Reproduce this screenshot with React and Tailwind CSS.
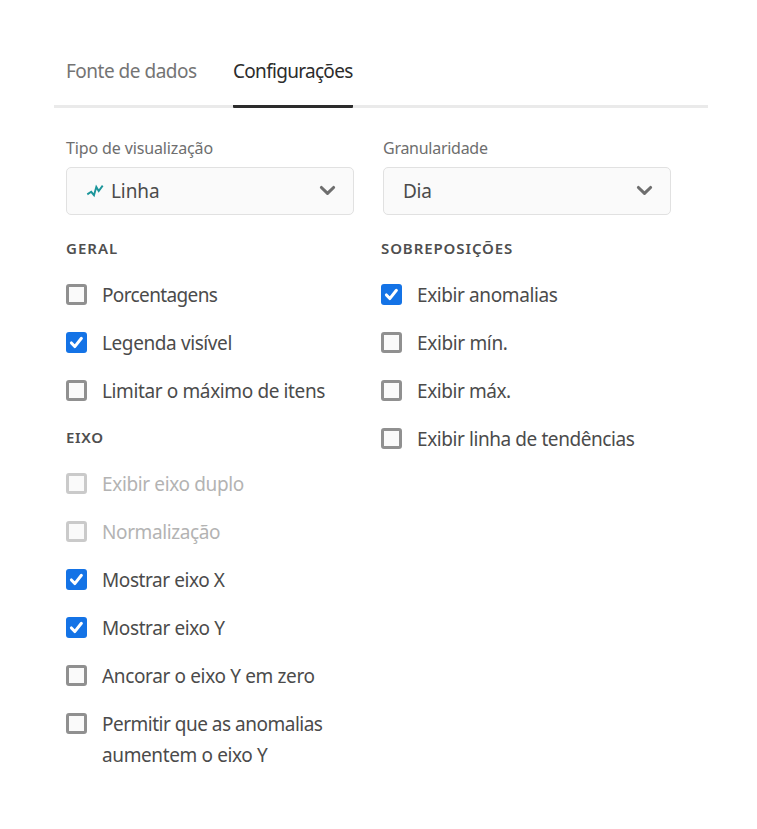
const general = [
  { label: "Porcentagens", track: "tracking-[-0.63px]" },
  { label: "Legenda visível", track: "tracking-[-0.4px]", checked: true },
  { label: "Limitar o máximo de itens", track: "tracking-[-0.38px]" },
];

const axis = [
  { label: "Exibir eixo duplo", track: "tracking-[-0.36px]", disabled: true },
  { label: "Normalização", track: "tracking-[-0.4px]", disabled: true },
  { label: "Mostrar eixo X", track: "tracking-[-0.42px]", checked: true },
  { label: "Mostrar eixo Y", track: "tracking-[-0.4px]", checked: true },
  { label: "Ancorar o eixo Y em zero", track: "tracking-[-0.36px]" },
  {
    label: "Permitir que as anomalias",
    track: "tracking-[-0.5px]",
    second: "aumentem o eixo Y",
    secondTrack: "tracking-[-0.38px]",
  },
];

const overlays = [
  { label: "Exibir anomalias", track: "tracking-[-0.4px]", checked: true },
  { label: "Exibir mín.", track: "tracking-[-0.35px]" },
  { label: "Exibir máx.", track: "tracking-[-0.43px]" },
  { label: "Exibir linha de tendências", track: "tracking-[-0.42px]" },
];

function Box({ checked, disabled }) {
  if (checked) {
    return (
      <span className="mt-[13px] flex size-[21px] shrink-0 rounded-[3px] bg-[#1473e6]">
        <svg viewBox="0 0 21 21" className="size-[21px]" fill="none" stroke="#fff" strokeWidth="3" strokeLinecap="round" strokeLinejoin="round">
          <path d="M5.4 10.9 8.8 14.6 15.4 6.3" />
        </svg>
      </span>
    );
  }
  return (
    <span
      className={`mt-[13px] size-[21px] shrink-0 rounded-[3px] border-3 bg-[#fafafa] ${disabled ? "border-[#cacaca]" : "border-[#909090]"}`}
    />
  );
}

function Option({ label, track, second, secondTrack, checked, disabled }) {
  return (
    <div className="flex min-h-12 items-start">
      <Box checked={checked} disabled={disabled} />
      <div className={`mt-[9px] ml-[15px] flex flex-col text-[19px] leading-[31px] whitespace-nowrap ${disabled ? "text-[#b3b3b3]" : "text-[#4b4b4b]"}`}>
        <span className={track}>{label}</span>
        {second && <span className={secondTrack}>{second}</span>}
      </div>
    </div>
  );
}

function Section({ title, track, options }) {
  return (
    <section>
      <h3 className={`h-[45px] text-[15px] leading-[45px] font-semibold text-[#4f4f4f] ${track}`}>{title}</h3>
      {options.map((o) => (
        <Option key={o.label} {...o} />
      ))}
    </section>
  );
}

function Picker({ label, labelTrack, children }) {
  return (
    <div className="w-72">
      <div className={`h-[39px] text-[16px] leading-[40px] text-[#6e6e6e] ${labelTrack}`}>{label}</div>
      <div className="flex h-12 items-center rounded-[5px] border border-[#e1e1e1] bg-[#fafafa] pr-[17px] pl-[18px] text-[19px] text-[#4b4b4b]">
        {children}
        <svg viewBox="0 0 17 11" className="mb-px ml-auto h-[11px] w-[17px]" fill="none" stroke="#6e6e6e" strokeWidth="3.1" strokeLinecap="round" strokeLinejoin="round">
          <path d="M2.4 2.5 8.5 8.4 14.6 2.5" />
        </svg>
      </div>
    </div>
  );
}

export default function App() {
  return (
    <div className="h-[829px] w-[757px] bg-white pt-[34px] font-['Noto_Sans',sans-serif]">
      <nav className="ml-[54px] flex h-[74px] w-[654px] border-b-3 border-[#eaeaea] pl-3 text-[19px] leading-[75px] whitespace-nowrap">
        <div className="w-[167px] tracking-[-0.5px] text-[#747474]">Fonte de dados</div>
        <div className="h-[74px] w-[120px] shrink-0 rounded-b-[1px] border-b-3 border-[#2c2c2c] tracking-[-0.7px] text-[#2c2c2c]">
          Configurações
        </div>
      </nav>
      <div className="mt-5 ml-[66px] flex gap-[29px]">
        <Picker label="Tipo de visualização" labelTrack="tracking-[-0.13px]">
          <svg viewBox="0 0 18 14" className="mr-[7px] ml-[1px] h-[14px] w-[18px]" fill="none" stroke="#1b959a" strokeWidth="1.9">
            <path d="M1.3 10.4 5.2 7.8 8 11.2 10.3 2.9 12.7 7 16.7 1.6" />
          </svg>
          <span className="tracking-[-0.1px]">Linha</span>
        </Picker>
        <Picker label="Granularidade" labelTrack="tracking-[-0.27px]">
          <span className="ml-px tracking-[-0.25px]">Dia</span>
        </Picker>
      </div>
      <div className="mt-[11px] ml-[66px] flex">
        <div className="w-[315px]">
          <Section title="GERAL" track="tracking-[1px]" options={general} />
          <Section title="EIXO" track="tracking-[0.65px]" options={axis} />
        </div>
        <Section title="SOBREPOSIÇÕES" track="tracking-[0.9px]" options={overlays} />
      </div>
    </div>
  );
}
